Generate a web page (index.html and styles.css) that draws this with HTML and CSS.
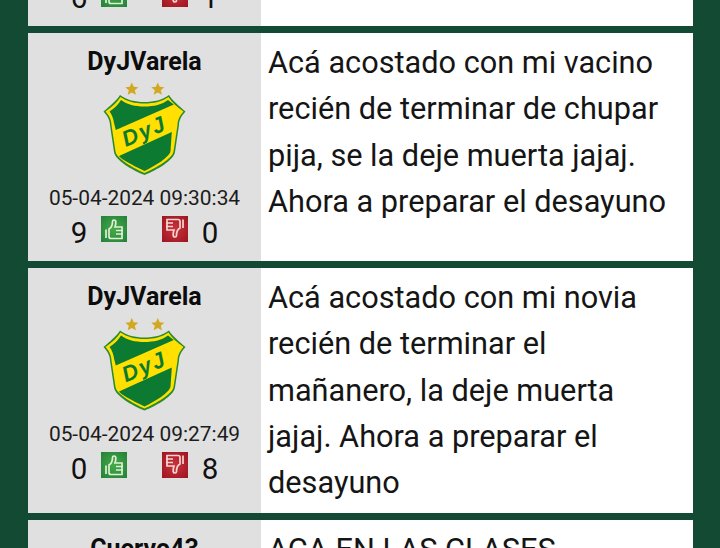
FILE: index.html
```html
<!DOCTYPE html>
<html lang="en">
<head>
    <meta charset="UTF-8">
    <meta name="viewport" content="width=device-width, initial-scale=1.0">
    <title>Comentarios</title>
    <link rel="stylesheet" href="styles.css">
</head>
<body>
    <svg class="defs" width="0" height="0">
        <defs>
            <radialGradient id="up-glow" cx="50%" cy="50%" r="70%">
                <stop offset="0%" stop-color="#46ab48"/>
                <stop offset="100%" stop-color="#23803a"/>
            </radialGradient>
            <radialGradient id="down-glow" cx="50%" cy="50%" r="70%">
                <stop offset="0%" stop-color="#c9343c"/>
                <stop offset="100%" stop-color="#9c1420"/>
            </radialGradient>
            <symbol id="shield" viewBox="0 0 85 94">
                <polygon class="star" points="29.8,0.5 31.7,4.8 36.3,5.2 32.8,8.2 33.9,12.8 29.8,10.4 25.7,12.8 26.8,8.2 23.3,5.2 27.9,4.8"/>
                <polygon class="star" points="55.8,0.5 57.7,4.8 62.3,5.2 58.8,8.2 59.9,12.8 55.8,10.4 51.7,12.8 52.8,8.2 49.3,5.2 53.9,4.8"/>
                <path class="rim" d="M42.5 20 C33 20 25 18 18 13 C15 18 8 24 1.5 29.5 C5 33 8 38 8 43 L12 70 C13 78 30 88 42.5 93 C55 88 72 78 73 70 L77 43 C77 38 80 33 83.5 29.5 C77 24 70 18 67 13 C60 18 52 20 42.5 20 Z"/>
                <path class="ring" d="M42.5 21.5 C33 21.5 25 19.5 18.5 15 C15.5 20 10 25 3.5 29.5 C7 33 9.5 38 9.5 43 L13.5 69.5 C14.5 76.5 31 86 42.5 91 C54 86 70.5 76.5 71.5 69.5 L75.5 43 C75.5 38 78 33 81.5 29.5 C75 25 69.5 20 66.5 15 C60 19.5 52 21.5 42.5 21.5 Z"/>
                <path class="field" d="M42.5 24.5 C33 24.5 25 22.5 19 18 C16.5 22 13 26 7.5 29.5 C10 32.5 11.5 37 12 41 L13.8 48 L71.8 22.5 C70 21 68.5 20 66 18 C60 22.5 52 24.5 42.5 24.5 Z"/>
                <path class="field" d="M17 74 L69.8 50 L68.5 69 C67.5 75 53 84 42.5 89 C32 84 18.5 77 17 74 Z"/>
                <text class="crest" transform="translate(45 56) rotate(-23)" text-anchor="middle">DyJ</text>
            </symbol>
            <symbol id="thumb-up" viewBox="0 0 26 26">
                <rect fill="url(#up-glow)" width="26" height="26"/>
                <g class="hand">
                    <path d="M8 13 C10 12 11.5 9.5 11.5 5.5 C11.5 3.5 14.5 3.5 14.8 5.5 C15 8 14.5 9.5 14 11 L21 11 L21 22.5 L10 22.5 C8.8 22.5 8 21.5 8 20.5 Z"/>
                    <path d="M5 13.5 L5 22"/>
                    <path d="M15 14.5 L22 14.5 M15 18 L22 18"/>
                </g>
            </symbol>
            <symbol id="thumb-down" viewBox="0 0 26 26">
                <rect fill="url(#down-glow)" width="26" height="26"/>
                <g class="hand">
                    <path d="M18 12 C16 13 14.5 15.5 14.5 19.5 C14.5 21.5 11.5 21.5 11.2 19.5 C11 17 11.5 15.5 12 14 L5 14 L5 3.5 L16 3.5 C17.2 3.5 18 4.5 18 5.5 Z"/>
                    <path d="M21 3.5 L21 12"/>
                    <path d="M4 7 L11 7 M4 10.5 L11 10.5"/>
                </g>
            </symbol>
        </defs>
    </svg>

    <div class="list">
        <div class="post post-cut">
            <div class="user user-end">
                <div class="votes">
                    <span class="num">6</span>
                    <svg class="thumb"><use href="#thumb-up"/></svg>
                    <svg class="thumb"><use href="#thumb-down"/></svg>
                    <span class="num">1</span>
                </div>
            </div>
            <div class="msg"></div>
        </div>

        <div class="post">
            <div class="user">
                <div class="name">DyJVarela</div>
                <svg class="logo"><use href="#shield"/></svg>
                <div class="date">05-04-2024 09:30:34</div>
                <div class="votes">
                    <span class="num">9</span>
                    <svg class="thumb"><use href="#thumb-up"/></svg>
                    <svg class="thumb"><use href="#thumb-down"/></svg>
                    <span class="num">0</span>
                </div>
            </div>
            <div class="msg">Acá acostado con mi vacino recién de terminar de chupar pija, se la deje muerta jajaj. Ahora a preparar el desayuno</div>
        </div>

        <div class="post">
            <div class="user">
                <div class="name">DyJVarela</div>
                <svg class="logo"><use href="#shield"/></svg>
                <div class="date">05-04-2024 09:27:49</div>
                <div class="votes">
                    <span class="num">0</span>
                    <svg class="thumb"><use href="#thumb-up"/></svg>
                    <svg class="thumb"><use href="#thumb-down"/></svg>
                    <span class="num">8</span>
                </div>
            </div>
            <div class="msg">Acá acostado con mi novia recién de terminar el mañanero, la deje muerta jajaj. Ahora a preparar el desayuno</div>
        </div>

        <div class="post">
            <div class="user">
                <div class="name">Cuervo43</div>
            </div>
            <div class="msg">ACA EN LAS CLASES</div>
        </div>
    </div>
</body>
</html>
```

FILE: styles.css
```css
html, body {
    margin: 0;
    padding: 0;
    height: 548px;
    overflow: hidden;
    background-color: #124a34;
    font-family: Roboto, "Liberation Sans", sans-serif;
    color: #111;
}

.defs {
    display: block;
    height: 0;
}

.list {
    display: flex;
    flex-direction: column;
    gap: 7px;
    padding: 0 27px 0 28px;
}

.post {
    display: grid;
    grid-template-columns: 233px 432px;
    background-color: #fff;
    flex-shrink: 0;
}

.post-cut {
    height: 26px;
    overflow: hidden;
}

.user {
    background-color: #e0e0e0;
    display: flex;
    flex-direction: column;
    align-items: center;
    padding-top: 16px;
    height: 212px;
}

.post:nth-child(3) .user {
    height: 229px;
}

.post:nth-child(3) .logo {
    height: 95px;
}

.post-cut .user {
    height: 26px;
    padding-top: 0;
    justify-content: flex-end;
    box-sizing: border-box;
    padding-bottom: 19px;
}

.name {
    font-size: 25px;
    font-weight: 700;
    line-height: 26px;
    color: #0c0c0c;
}

.logo {
    width: 85px;
    height: 94px;
    margin-top: 7px;
}

.date {
    font-size: 20.9px;
    line-height: 26px;
    margin-top: 9px;
    color: #1c1c1c;
}

.votes {
    display: flex;
    align-items: flex-start;
    justify-content: center;
    flex-shrink: 0;
    width: 233px;
    height: 26px;
    margin-top: 5px;
}

.num {
    width: 28px;
    font-size: 29.5px;
    line-height: 34px;
    margin-top: 0;
    text-align: center;
}

.thumb {
    width: 26px;
    height: 26px;
    margin: 0 4px 0 8px;
}

.thumb + .thumb {
    margin: 0 8px 0 31px;
}

.msg {
    padding: 7px 20px 6px 7px;
    font-size: 30.7px;
    line-height: 46.3px;
    color: #151515;
}

/* shield parts */
.star { fill: #d2a820; }
.rim { fill: #2c8a2e; }
.ring { fill: #ffe000; }
.field { fill: #0c7a30; }

.crest {
    font-family: "Liberation Sans", sans-serif;
    font-size: 22px;
    font-weight: 700;
    font-style: italic;
    letter-spacing: 2px;
    fill: #0c7a30;
}

/* thumb parts */
.hand {
    fill: none;
    stroke: #dff0d4;
    stroke-width: 1.7;
    filter: blur(0.3px);
}

#thumb-down .hand {
    stroke: #f6d6d2;
}
```
